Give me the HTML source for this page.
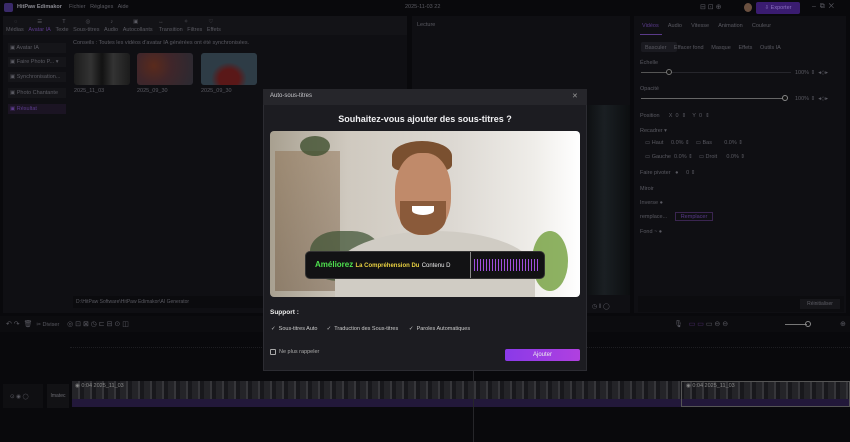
<!DOCTYPE html>
<html><head><meta charset="utf-8"><style>
*{margin:0;padding:0;box-sizing:border-box}
body{width:850px;height:442px;overflow:hidden;background:#09090c;font-family:"Liberation Sans",sans-serif;color:#6b6b72;font-size:6px;position:relative}
.a{position:absolute}
.pan{background:#0f0f13}
.t{font-size:5.5px;color:#5a5a62;white-space:nowrap}
</style></head><body>
<!-- top bar -->
<div class="a" style="left:4px;top:3px;width:9px;height:9px;background:#3a2a6a;border-radius:2px"></div>
<div class="a t" style="left:17px;top:4px;color:#8a8a92;font-weight:bold">HitPaw Edimakor</div>
<div class="a t" style="left:69px;top:4px">Fichier &nbsp; Réglages &nbsp; Aide</div>
<div class="a t" style="left:405px;top:4px">2025-11-03 22</div>
<div class="a t" style="left:700px;top:3px;font-size:7px">⊟ ⊡ ⊕</div>
<div class="a" style="left:744px;top:3px;width:8px;height:9px;border-radius:50%;background:#6a5040"></div>
<div class="a" style="left:756px;top:2px;width:44px;height:12px;background:#3a1c70;border-radius:2px;font-size:5.5px;color:#8a70c0;text-align:center;line-height:12px">⇩ Exporter</div>
<div class="a t" style="left:812px;top:3px;font-size:7px">–&nbsp; ⧉&nbsp; ✕</div>
<!-- left media panel -->
<div class="a pan" style="left:3px;top:16px;width:404px;height:297px"></div>
<div class="a" style="left:3px;top:16px;width:404px;height:19px;background:#131317"></div>
<div class="a t" style="left:6px;top:27px">Médias&nbsp;&nbsp;&nbsp;<span style="color:#5a3a8a">Avatar IA</span>&nbsp;&nbsp;&nbsp;Texte&nbsp;&nbsp;&nbsp;Sous-titres&nbsp;&nbsp;&nbsp;Audio&nbsp;&nbsp;&nbsp;Autocollants&nbsp;&nbsp;&nbsp;&nbsp;Transition&nbsp;&nbsp;&nbsp;Filtres&nbsp;&nbsp;&nbsp;Effets</div>
<div class="a t" style="left:14px;top:19px;letter-spacing:20px">◌☰T◎♪▣↔✧♡</div>
<div class="a t" style="left:8px;top:43px;background:#151519;width:58px;padding:2px">▣ Avatar IA</div>
<div class="a t" style="left:8px;top:57px;background:#151519;width:58px;padding:2px">▣ Faire Photo P... ▾</div>
<div class="a t" style="left:8px;top:72px;background:#151519;width:58px;padding:2px">▣ Synchronisation...</div>
<div class="a t" style="left:8px;top:88px;background:#151519;width:58px;padding:2px">▣ Photo Chantante</div>
<div class="a t" style="left:8px;top:104px;background:#1b1423;width:58px;padding:2px;color:#5a3a8a">▣ Résultat</div>
<div class="a t" style="left:73px;top:40px">Conseils : Toutes les vidéos d'avatar IA générées ont été synchronisées.</div>
<div class="a" style="left:74px;top:53px;width:56px;height:32px;background:linear-gradient(90deg,#1c1c1c 0,#333 30%,#121212 50%,#333 70%,#1c1c1c);border-radius:3px"></div>
<div class="a" style="left:137px;top:53px;width:56px;height:32px;background:radial-gradient(circle at 30% 40%,#5a2a1c,#40262a 40%,#2a2a32);border-radius:3px"></div>
<div class="a" style="left:201px;top:53px;width:56px;height:32px;background:radial-gradient(ellipse at 50% 80%,#5a1818 25%,#2e3c46 45%);border-radius:3px"></div>
<div class="a t" style="left:74px;top:88px">2025_11_03</div>
<div class="a t" style="left:137px;top:88px">2025_09_30</div>
<div class="a t" style="left:201px;top:88px">2025_09_30</div>
<div class="a" style="left:73px;top:296px;width:330px;height:12px;background:#0b0b0e"></div>
<div class="a t" style="left:76px;top:299px;font-size:5px">D:\HitPaw Software\HitPaw Edimakor\AI Generator</div>
<!-- preview -->
<div class="a pan" style="left:412px;top:16px;width:218px;height:297px"></div>
<div class="a t" style="left:417px;top:22px">Lecture</div>
<div class="a" style="left:587px;top:105px;width:43px;height:190px;background:linear-gradient(90deg,#0e1012,#1a1f23 40%,#0c0e10)"></div>
<div class="a t" style="left:592px;top:303px;font-size:6px">◷ ‖ ◯</div>
<!-- right panel -->
<div class="a pan" style="left:634px;top:16px;width:212px;height:297px"></div>
<div class="a t" style="left:642px;top:23px"><span style="color:#5a3a8a">Vidéos</span>&nbsp;&nbsp;&nbsp;&nbsp;&nbsp;&nbsp;Audio&nbsp;&nbsp;&nbsp;&nbsp;&nbsp;&nbsp;Vitesse&nbsp;&nbsp;&nbsp;&nbsp;&nbsp;&nbsp;Animation&nbsp;&nbsp;&nbsp;&nbsp;&nbsp;&nbsp;Couleur</div>
<div class="a" style="left:640px;top:34px;width:22px;height:1px;background:#5a3a8a"></div>
<div class="a" style="left:641px;top:42px;width:36px;height:10px;background:#1a1a20;border-radius:2px"></div>
<div class="a t" style="left:645px;top:45px">Basculer&nbsp;&nbsp;&nbsp;&nbsp;&nbsp;Effacer fond&nbsp;&nbsp;&nbsp;&nbsp;&nbsp;Masque&nbsp;&nbsp;&nbsp;&nbsp;&nbsp;Effets&nbsp;&nbsp;&nbsp;&nbsp;&nbsp;Outils IA</div>
<div class="a t" style="left:640px;top:60px">Échelle</div>
<div class="a" style="left:641px;top:72px;width:150px;height:1px;background:#26262c"></div>
<div class="a" style="left:641px;top:72px;width:28px;height:1px;background:#555"></div>
<div class="a" style="left:666px;top:69px;width:6px;height:6px;border:1px solid #777;border-radius:50%;background:#111"></div>
<div class="a t" style="left:795px;top:70px">100% ⇕ &nbsp;◂◇▸</div>
<div class="a t" style="left:640px;top:86px">Opacité</div>
<div class="a" style="left:641px;top:98px;width:145px;height:1px;background:#666"></div>
<div class="a" style="left:782px;top:95px;width:6px;height:6px;border:1px solid #888;border-radius:50%;background:#111"></div>
<div class="a t" style="left:795px;top:96px">100% ⇕ &nbsp;◂◇▸</div>
<div class="a t" style="left:640px;top:113px">Position&nbsp;&nbsp;&nbsp;&nbsp;&nbsp;&nbsp;X&nbsp; 0&nbsp; ⇕&nbsp;&nbsp;&nbsp;&nbsp;Y&nbsp; 0&nbsp; ⇕</div>
<div class="a t" style="left:640px;top:128px">Recadrer ▾</div>
<div class="a t" style="left:645px;top:140px">▭ Haut&nbsp;&nbsp;&nbsp;&nbsp;&nbsp;0.0% ⇕&nbsp;&nbsp;&nbsp;&nbsp;▭ Bas&nbsp;&nbsp;&nbsp;&nbsp;&nbsp;&nbsp;&nbsp;&nbsp;0.0% ⇕</div>
<div class="a t" style="left:645px;top:154px">▭ Gauche&nbsp; 0.0% ⇕&nbsp;&nbsp;&nbsp;&nbsp;▭ Droit&nbsp;&nbsp;&nbsp;&nbsp;&nbsp;&nbsp;0.0% ⇕</div>
<div class="a t" style="left:640px;top:170px">Faire pivoter&nbsp;&nbsp;&nbsp;●&nbsp;&nbsp;&nbsp;&nbsp;&nbsp;0 ⇕</div>
<div class="a t" style="left:640px;top:186px">Miroir</div>
<div class="a t" style="left:640px;top:200px">Inverse ●</div>
<div class="a t" style="left:640px;top:214px">remplace...</div>
<div class="a" style="left:675px;top:212px;width:38px;height:9px;border:1px solid #3a2550;font-size:5.5px;color:#5a3a8a;text-align:center;line-height:8px">Remplacer</div>
<div class="a t" style="left:640px;top:229px">Fond ~ ●</div>
<div class="a" style="left:638px;top:296px;width:206px;height:16px;background:#0c0c0f"></div>
<div class="a" style="left:800px;top:299px;width:40px;height:10px;background:#16161a;font-size:5px;color:#5e5e66;text-align:center;line-height:10px">Réinitialiser</div>
<!-- toolbar -->
<div class="a" style="left:0;top:316px;width:850px;height:16px;background:#0c0c0f"></div>
<div class="a t" style="left:6px;top:320px;font-size:7px">↶ ↷ &nbsp;🗑&nbsp;&nbsp;<span style="font-size:5.5px">✂ Diviser</span>&nbsp;&nbsp;&nbsp; ◎ ⊡ ⊠ ◷ ⊏ ⊟ ⊙ ◫</div>
<div class="a t" style="left:674px;top:320px;font-size:7px">🎙&nbsp;&nbsp;&nbsp;<span style="color:#4a2a6a">▭ ▭</span> ▭ ⊖ ⊖</div>
<div class="a" style="left:785px;top:324px;width:22px;height:1px;background:#777"></div>
<div class="a" style="left:805px;top:321px;width:6px;height:6px;border:1px solid #888;border-radius:50%"></div>
<div class="a t" style="left:840px;top:320px;font-size:7px">⊕</div>
<div class="a" style="left:70px;top:338px;width:780px;height:10px;border-bottom:1px dotted #1e1e22"></div>
<!-- track -->
<div class="a" style="left:3px;top:384px;width:40px;height:24px;background:#0f0f12"></div>
<div class="a t" style="left:10px;top:394px">⊙ ◉ ◯</div>
<div class="a" style="left:47px;top:384px;width:22px;height:24px;background:#121215;font-size:5px;line-height:24px;text-align:center">Imatec</div>
<div class="a" style="left:72px;top:381px;width:778px;height:18px;background:repeating-linear-gradient(90deg,#242428 0 6px,#36363a 6px 8px,#18181c 8px 12px)"></div>
<div class="a" style="left:72px;top:399px;width:778px;height:8px;background:#22183a"></div>
<div class="a t" style="left:75px;top:383px;color:#888">◉ 0:04 2025_11_03</div>
<div class="a" style="left:681px;top:381px;width:169px;height:26px;border:1px solid #555"></div>
<div class="a t" style="left:686px;top:383px;color:#888">◉ 0:04 2025_11_03</div>
<div class="a" style="left:473px;top:332px;width:1px;height:110px;background:#26262a"></div>
<!-- modal -->
<div class="a" style="left:263px;top:89px;width:324px;height:282px;background:#1c1c21;border:1px solid #2c2c32"></div>
<div class="a" style="left:263px;top:89px;width:324px;height:16px;background:#26262b"></div>
<div class="a" style="left:270px;top:93px;font-size:6px;color:#c8c8cc">Auto-sous-titres</div>
<div class="a" style="left:572px;top:92px;font-size:7px;color:#999">✕</div>
<div class="a" style="left:263px;top:114px;width:324px;text-align:center;font-size:9px;font-weight:bold;color:#f0f0f2">Souhaitez-vous ajouter des sous-titres ?</div>
<div class="a" style="left:270px;top:131px;width:310px;height:166px;border-radius:4px;overflow:hidden;background:linear-gradient(90deg,#a8a090 0,#cfc9bf 25%,#ddd9d3 60%,#efede9 85%,#ffffff)">
 <div class="a" style="left:5px;top:20px;width:65px;height:140px;background:linear-gradient(180deg,#8a6a4a,#6a5038);opacity:.45"></div>
 <div class="a" style="left:30px;top:5px;width:30px;height:20px;background:#405030;border-radius:50%;opacity:.8"></div>
 <div class="a" style="left:40px;top:100px;width:70px;height:50px;background:#3a5030;border-radius:40%;opacity:.7"></div>
 <div class="a" style="left:262px;top:100px;width:36px;height:60px;background:#6a9a30;border-radius:50%;opacity:.75"></div>
 <div class="a" style="left:65px;top:100px;width:200px;height:80px;background:#d0ccc4;border-radius:50% 50% 0 0"></div>
 <div class="a" style="left:122px;top:10px;width:60px;height:30px;background:#7a5030;border-radius:50% 50% 20% 20%"></div>
 <div class="a" style="left:125px;top:22px;width:56px;height:82px;background:#c08a6a;border-radius:45%"></div>
 <div class="a" style="left:130px;top:70px;width:46px;height:34px;background:#8a5a3a;border-radius:0 0 50% 50%"></div>
 <div class="a" style="left:142px;top:75px;width:22px;height:9px;background:#fff;border-radius:0 0 50% 50%"></div>
 <div class="a" style="left:35px;top:120px;width:240px;height:28px;background:#121214;border-radius:5px;border:1px solid #333"></div>
 <div class="a" style="left:45px;top:129px;font-size:8px;font-weight:bold;color:#4ee04e;white-space:nowrap">Améliorez <span style="font-size:6px;color:#e8d040">La Compréhension Du</span> <span style="font-size:6px;color:#eee;font-weight:normal">Contenu D</span></div>
 <div class="a" style="left:200px;top:121px;width:1px;height:26px;background:#888"></div>
 <div class="a" style="left:204px;top:128px;width:66px;height:12px;background:repeating-linear-gradient(90deg,#a050e0 0 1px,transparent 1px 3px)"></div>
</div>
<div class="a" style="left:270px;top:309px;font-size:6.5px;font-weight:bold;color:#eee">Support :</div>
<div class="a" style="left:271px;top:326px;font-size:5.5px;color:#ccc;white-space:nowrap">✓&nbsp; Sous-titres Auto&nbsp;&nbsp;&nbsp;&nbsp;&nbsp;&nbsp;✓&nbsp; Traduction des Sous-titres&nbsp;&nbsp;&nbsp;&nbsp;&nbsp;&nbsp;&nbsp;✓&nbsp; Paroles Automatiques</div>
<div class="a" style="left:270px;top:349px;width:6px;height:6px;border:1px solid #aaa;border-radius:1px"></div>
<div class="a" style="left:279px;top:349px;font-size:5.5px;color:#aaa">Ne plus rappeler</div>
<div class="a" style="left:505px;top:349px;width:75px;height:12px;border-radius:2px;background:linear-gradient(90deg,#8a3ae8,#b040e0);color:#eee;font-size:6px;text-align:center;line-height:12px">Ajouter</div>
</body></html>
